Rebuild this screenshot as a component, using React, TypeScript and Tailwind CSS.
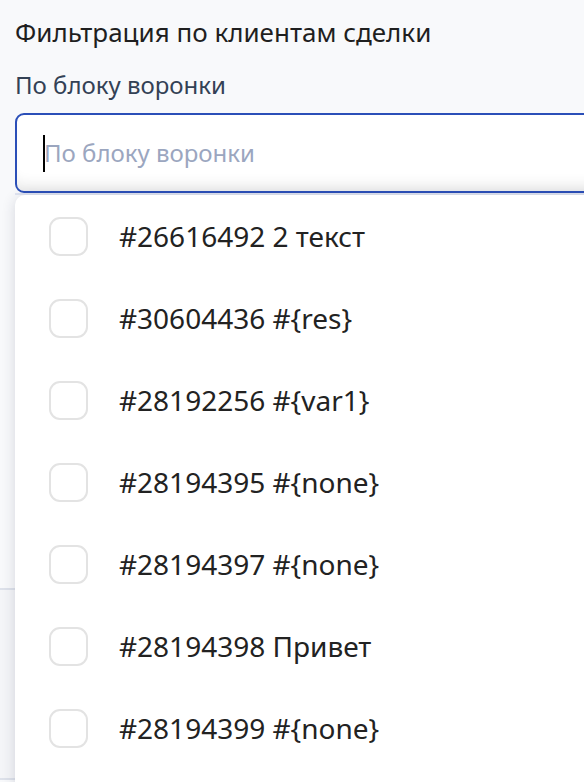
import React from 'react';

const ITEMS = [
  '#26616492 2 текст',
  '#30604436 #{res}',
  '#28192256 #{var1}',
  '#28194395 #{none}',
  '#28194397 #{none}',
  '#28194398 Привет',
  '#28194399 #{none}',
];

const FONT = { fontFamily: '"Noto Sans", "Open Sans", sans-serif' };

const App: React.FC = () => {
  return (
    <div className="relative h-[782px] w-[584px] overflow-hidden bg-[#f8f9fb]" style={FONT}>
      <div className="px-[15px] pt-[13px]">
        <h2 className="text-[26px] leading-[38px] text-[#1f1f1f]">Фильтрация по клиентам сделки</h2>
        <label className="mt-[17px] block text-[24px] leading-[34px] text-[#334155]">По блоку воронки</label>

        <div className="relative mt-[11px]">
          <div className="flex h-[80px] w-[620px] items-center rounded-[9px] border-2 border-[#2b4fb8] bg-white pl-[26px] shadow-[inset_0_-16px_14px_-10px_rgba(0,0,0,0.09)]">
            <span className="h-[37px] w-[2px] bg-black" />
            <span className="-ml-[1px] text-[24px] text-[#9ba6bf]">По блоку воронки</span>
          </div>
          <div className="h-[2px] w-[620px] bg-[#e0e4f1]" />

          {/* underlying content */}
          <div className="-ml-[15px] w-[640px]">
            <div className="h-[393px]" />
            <div className="h-[192px] border-y-2 border-[#dde1ea] bg-[#f4f5f8]" />
          </div>

          {/* dropdown */}
          <div className="absolute left-0 top-[82px] z-10 w-[640px] rounded-t-[10px] bg-white pb-[30px] shadow-[0_2px_14px_rgba(30,40,70,0.16)]">
            {ITEMS.map((item) => (
              <div key={item} className="flex h-[82px] items-center pl-[34px]">
                <span className="h-[39px] w-[39px] shrink-0 rounded-[11px] border-2 border-[#e3e3e3] bg-white" />
                <span className="ml-[31px] text-[28px] text-[#222222]">{item}</span>
              </div>
            ))}
          </div>
        </div>
      </div>
    </div>
  );
};

export default App;
